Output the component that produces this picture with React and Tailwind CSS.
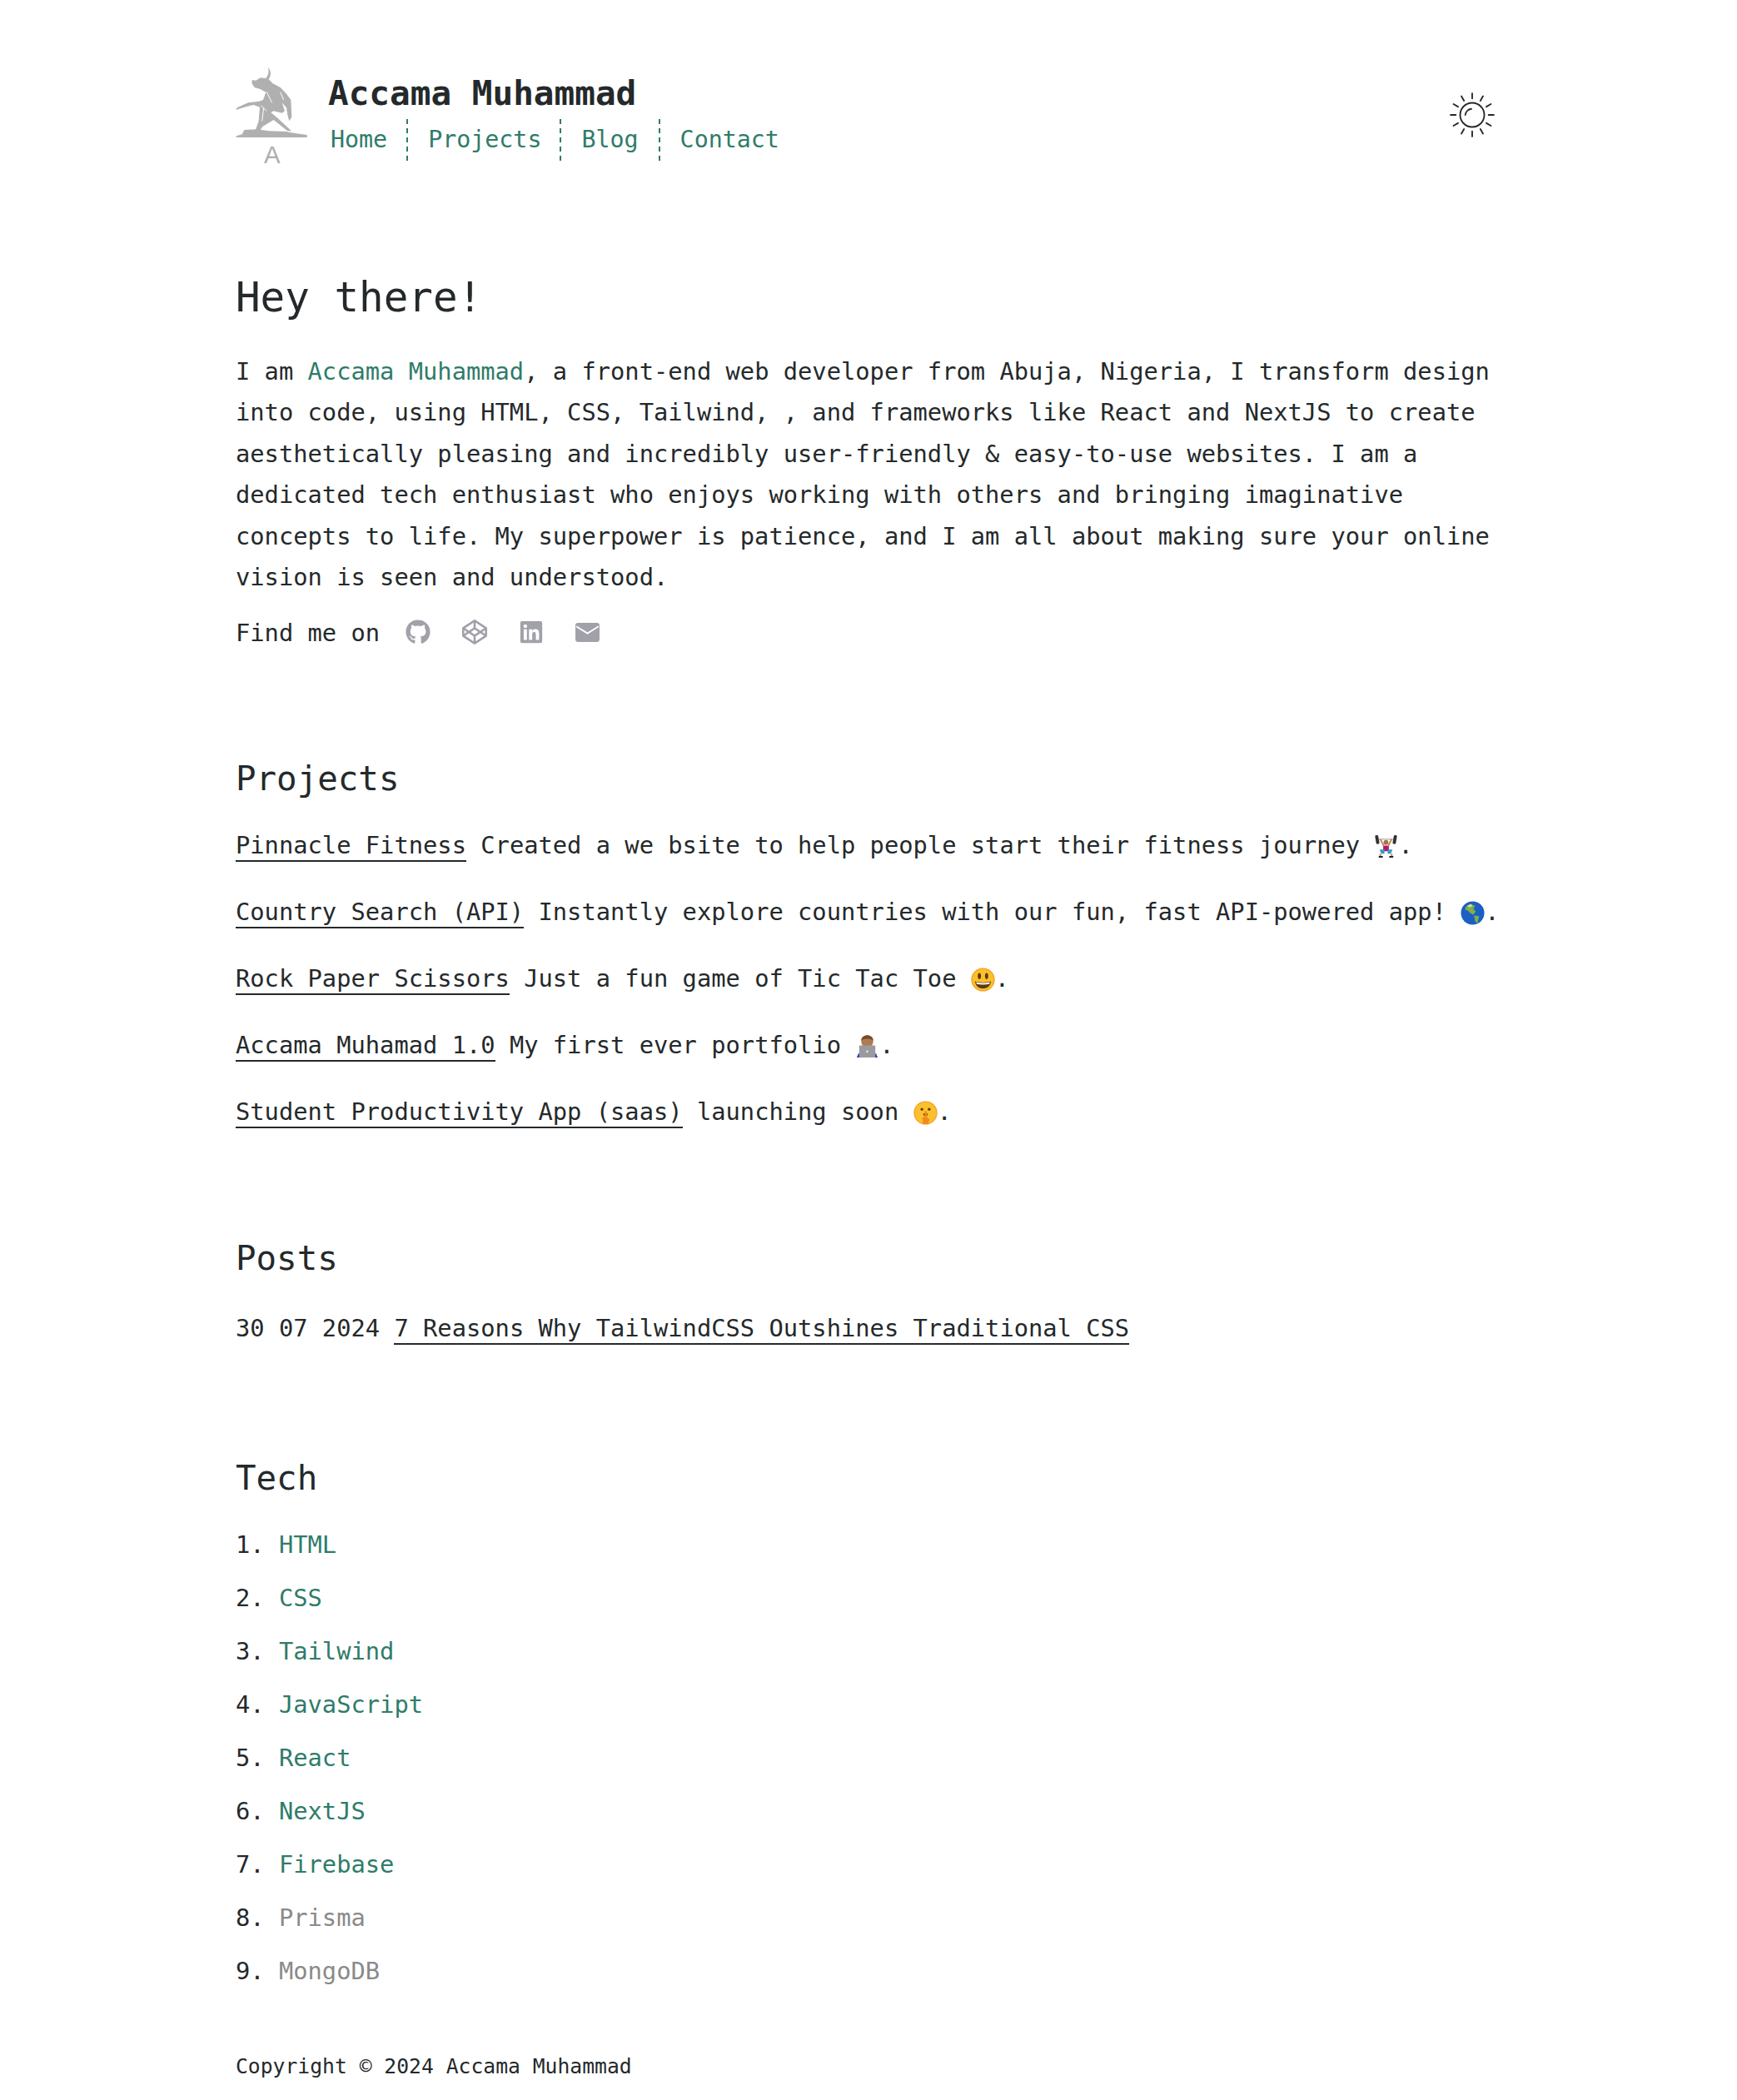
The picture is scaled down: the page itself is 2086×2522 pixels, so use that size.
import { FaGithub, FaCodepen, FaLinkedin } from 'react-icons/fa';

// Logo: toro rampante y la "A" debajo
function Logo() {
  return (
    <svg viewBox="39 30 261 360" className="w-[87px] h-[120px] shrink-0 overflow-visible">
      <path
        fill="#b0b0b0"
        d="M155 32C167 44 168 60 158 76L172 90L200 105L222 128L238 150L241 212L232 226L226 205L222 178L206 160L216 190L206 197L176 190L166 196L190 215L240 262L226 262L176 222L136 246L126 262L110 260L122 226L126 176L104 168L78 174L40 186L44 178L84 160L124 155L138 150L148 122L126 110L108 106L98 92L98 78L112 80L128 70L148 72C158 60 160 46 155 32Z"
      />
      <path d="M150 120L170 160M130 170L150 190M140 178L134 226M200 122L212 150" fill="none" stroke="#fff" strokeWidth="3" />
      <path fill="#b0b0b0" d="M40 285L42 280L62 274L70 258L115 256L160 262L220 264L240 268L268 272L296 276L296 285Z" />
      <text x="170" y="378" textAnchor="middle" fontFamily="Liberation Sans, sans-serif" fontSize="88" fill="#adadad">
        A
      </text>
    </svg>
  );
}

function Sol() {
  const rayos = [0, 30, 60, 90, 120, 150, 180, 210, 240, 270, 300, 330];
  return (
    <svg viewBox="0 0 56 56" className="w-[58px] h-[58px] mt-[29px] mr-[4px]" fill="none" stroke="#27272a" strokeWidth="1.8" strokeLinecap="round">
      <circle cx="28" cy="28" r="14" />
      <path d="M20 28a8 8 0 0 1 7-7" />
      {rayos.map((g) => (
        <line key={g} x1="28" y1="3" x2="28" y2="9" transform={`rotate(${g} 28 28)`} />
      ))}
    </svg>
  );
}

function Correo() {
  return (
    <svg viewBox="0 0 28 22" className="w-[29px] h-[23px]">
      <rect x="0" y="0" width="28" height="22" rx="3" fill="#a1a1aa" />
      <path d="M1 4l13 8 13-8" fill="none" stroke="#fff" strokeWidth="1.8" />
    </svg>
  );
}

function Levantador() {
  return (
    <svg viewBox="0 0 30 30" className="inline-block w-[29px] h-[29px] align-[-6px]">
      <path d="M6 6L24 6" stroke="#bbb" strokeWidth="1.5" />
      <rect x="2" y="1" width="4" height="11" rx="1.5" fill="#333" transform="rotate(-10 4 6)" />
      <rect x="24" y="1" width="4" height="11" rx="1.5" fill="#333" transform="rotate(10 26 6)" />
      <path d="M8 6L12 14M22 6L18 14" stroke="#c58a60" strokeWidth="2" />
      <circle cx="15" cy="10" r="3" fill="#a8714a" />
      <rect x="11.5" y="14" width="7" height="7" fill="#b01a6c" />
      <path d="M7 19h6v5H9zM23 19h-6v5h4z" fill="#2e9fc5" />
      <path d="M8 24v3M22 24v3" stroke="#c58a60" strokeWidth="2" />
      <path d="M6 28h5M19 28h5" stroke="#222" strokeWidth="2" />
    </svg>
  );
}

function Globo() {
  return (
    <svg viewBox="0 0 30 30" className="inline-block w-[29px] h-[29px] align-[-6px]">
      <circle cx="15" cy="15" r="14.5" fill="#1c5fc4" />
      <path d="M6 8l6-4 6 2-2 4 3 3-3 4-4-2-3-3-3-1zM17 18l6 1-2 9-3-3z" fill="#7fae4a" />
      <path d="M8 6l5-2 2 2-4 2z" fill="#e5d9a0" />
    </svg>
  );
}

function Sonrisa() {
  return (
    <svg viewBox="0 0 30 30" className="inline-block w-[29px] h-[29px] align-[-6px]">
      <circle cx="15" cy="15" r="14" fill="#fbc02d" stroke="#f49b1e" strokeWidth="1.2" />
      <ellipse cx="10.5" cy="10.5" rx="2" ry="3.8" fill="#5d3a12" />
      <ellipse cx="19.5" cy="10.5" rx="2" ry="3.8" fill="#5d3a12" />
      <path d="M5 17c6 2 14 2 20 0c-1 7-6 9-10 9s-9-2-10-9z" fill="#5d3a12" />
      <path d="M6.500 18c5 1.500 12 1.500 17 0l-.6 2.500c-5 1-11 1-15.800 0z" fill="#fff" />
    </svg>
  );
}

function Tecnologo() {
  return (
    <svg viewBox="0 0 30 30" className="inline-block w-[29px] h-[29px] align-[-6px]">
      <circle cx="15" cy="9" r="7.500" fill="#b07a52" />
      <path d="M7.500 8c0-9 15-9 15 0c-3-3-12-3-15 0z" fill="#7a4a26" />
      <path d="M2 29l2-5h22l2 5z" fill="#2c3cc4" />
      <rect x="5" y="14" width="20" height="15" rx="1" fill="#9a9a9f" />
      <circle cx="15" cy="21.500" r="1.300" fill="#eee" />
    </svg>
  );
}

function Silencio() {
  return (
    <svg viewBox="0 0 30 30" className="inline-block w-[29px] h-[29px] align-[-6px]">
      <circle cx="15" cy="15" r="14" fill="#fbc02d" stroke="#f49b1e" strokeWidth="1.2" />
      <circle cx="10.5" cy="10.5" r="1.700" fill="#5d3a12" />
      <circle cx="19.5" cy="10.5" r="1.700" fill="#5d3a12" />
      <ellipse cx="15" cy="17" rx="3" ry="1.700" fill="#8a4a16" />
      <path d="M14 13h2.500l.5 8 3 2-2 6h-6l-1-8 3-1z" fill="#f08c1a" />
    </svg>
  );
}

const proyectos = [
  { nombre: 'Pinnacle Fitness', texto: 'Created a we bsite to help people start their fitness journey', Emoji: Levantador },
  { nombre: 'Country Search (API)', texto: 'Instantly explore countries with our fun, fast API-powered app!', Emoji: Globo },
  { nombre: 'Rock Paper Scissors', texto: 'Just a fun game of Tic Tac Toe', Emoji: Sonrisa },
  { nombre: 'Accama Muhamad 1.0', texto: 'My first ever portfolio', Emoji: Tecnologo },
  { nombre: 'Student Productivity App (saas)', texto: 'launching soon', Emoji: Silencio },
];

const tecnologias = [
  { nombre: 'HTML', activo: true },
  { nombre: 'CSS', activo: true },
  { nombre: 'Tailwind', activo: true },
  { nombre: 'JavaScript', activo: true },
  { nombre: 'React', activo: true },
  { nombre: 'NextJS', activo: true },
  { nombre: 'Firebase', activo: true },
  { nombre: 'Prisma', activo: false },
  { nombre: 'MongoDB', activo: false },
];

export default function App() {
  return (
    <div className="min-h-screen bg-white text-[#24292b] font-['DejaVu_Sans_Mono',monospace] text-[28.75px] whitespace-pre-wrap">
      <div className="ml-[283px] w-[1518px] pt-[80px]">
        <header className="flex justify-between h-[120px]">
          <div className="flex gap-[24px]">
            <Logo />
            <div className="pt-[6px]">
              <h1 className="text-[41px] leading-[52px] font-bold">Accama Muhammad</h1>
              <nav className="flex mt-[5px] h-[50px] text-[#2f7c6a] text-[28.3px] leading-[50px]">
                <a className="pl-[3px] pr-[23px] border-r-2 border-dashed border-[#2f7c6a]">Home</a>
                <a className="pl-[24px] pr-[22px] border-r-2 border-dashed border-[#2f7c6a]">Projects</a>
                <a className="pl-[24px] pr-[24px] border-r-2 border-dashed border-[#2f7c6a]">Blog</a>
                <a className="pl-[24px]">Contact</a>
              </nav>
            </div>
          </div>
          <Sol />
        </header>

        <h2 className="mt-[127px] text-[49.200px] leading-[60px]">Hey there!</h2>
        <p className="mt-[34.500px] leading-[49.600px]">
          I am <span className="text-[#2f7c6a]">Accama Muhammad</span>, a front-end web developer from Abuja, Nigeria, I transform design into code, using HTML, CSS, Tailwind, , and frameworks like React and NextJS to create aesthetically pleasing and incredibly user-friendly &amp; easy-to-use websites. I am a dedicated tech enthusiast who enjoys working with others and bringing imaginative concepts to life. My superpower is patience, and I am all about making sure your online vision is seen and understood.
        </p>
        <div className="mt-[15px] h-[50px] flex items-center">
          <span className="pt-[2px]">Find me on</span>
          <div className="ml-[31px] flex items-center gap-[38px] text-[#a1a1aa]">
            <FaGithub size={30} />
            <FaCodepen size={30} />
            <FaLinkedin size={30} />
            <Correo />
          </div>
        </div>

        <h2 className="mt-[126px] text-[40.800px] leading-[50px]">Projects</h2>
        <ul className="mt-[29.500px] flex flex-col gap-[30px]">
          {proyectos.map(({ nombre, texto, Emoji }) => (
            <li key={nombre} className="leading-[50px] h-[50px] whitespace-nowrap">
              <a className="border-b-2 border-[#24292b] pb-[1px]">{nombre}</a> {texto} <Emoji />.
            </li>
          ))}
        </ul>

        <h2 className="mt-[126px] text-[40.800px] leading-[50px]">Posts</h2>
        <p className="mt-[34px] leading-[50px]">
          30 07 2024 <a className="border-b-2 border-[#24292b] pb-[1px]">7 Reasons Why TailwindCSS Outshines Traditional CSS</a>
        </p>

        <h2 className="mt-[130px] text-[40.800px] leading-[50px]">Tech</h2>
        <ol className="mt-[30px] flex flex-col gap-[14px]">
          {tecnologias.map((t, i) => (
            <li key={t.nombre} className="leading-[50px] h-[50px]">
              {i + 1}. <span className={t.activo ? 'text-[#2f7c6a]' : 'text-[#8a8a8a]'}>{t.nombre}</span>
            </li>
          ))}
        </ol>

        <footer className="mt-[72px] text-[24.700px] leading-[36px]">Copyright © 2024 Accama Muhammad</footer>
      </div>
    </div>
  );
}
